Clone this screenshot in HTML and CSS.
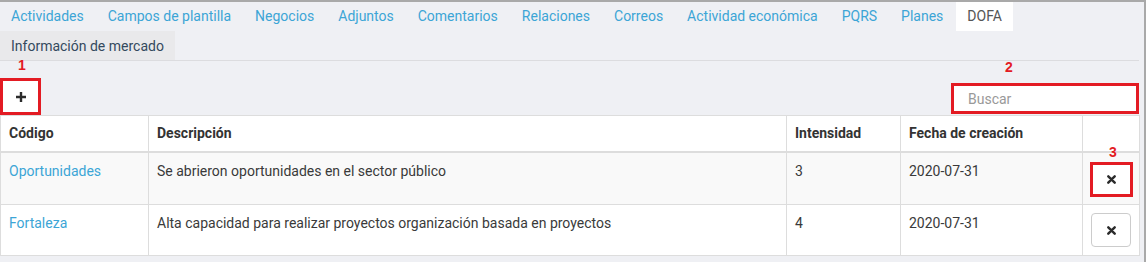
FILE: index.html
```html
<!DOCTYPE html>
<html lang="es">
<head>
  <meta charset="UTF-8">
  <title>DOFA</title>
  <link rel="stylesheet" href="styles.css">
</head>
<body>
  <div class="panel">
    <ul class="tabs">
      <li><a href="#">Actividades</a></li>
      <li><a href="#">Campos de plantilla</a></li>
      <li><a href="#">Negocios</a></li>
      <li><a href="#">Adjuntos</a></li>
      <li><a href="#">Comentarios</a></li>
      <li><a href="#">Relaciones</a></li>
      <li><a href="#">Correos</a></li>
      <li><a href="#">Actividad económica</a></li>
      <li><a href="#">PQRS</a></li>
      <li><a href="#">Planes</a></li>
      <li class="active"><a href="#">DOFA</a></li>
      <li class="hovered"><a href="#">Información de mercado</a></li>
    </ul>

    <div class="toolbar">
      <div class="marked">
        <span class="mark mark-1">1</span>
        <button class="btn btn-add flag" type="button">
          <svg width="10" height="10" viewBox="0 0 10 10"><path d="M3.8 0h2.4v3.8H10v2.4H6.2V10H3.8V6.2H0V3.8h3.8z" fill="#2b2b2b"/></svg>
        </button>
      </div>
      <div class="marked">
        <span class="mark mark-2">2</span>
        <input class="search flag" type="text" placeholder="Buscar">
      </div>
    </div>

    <table class="grid">
      <colgroup>
        <col style="width:148px">
        <col style="width:638px">
        <col style="width:114px">
        <col style="width:182px">
        <col style="width:57px">
      </colgroup>
      <thead>
        <tr>
          <th>Código</th>
          <th>Descripción</th>
          <th>Intensidad</th>
          <th>Fecha de creación</th>
          <th></th>
        </tr>
      </thead>
      <tbody>
        <tr>
          <td><a href="#">Oportunidades</a></td>
          <td>Se abrieron oportunidades en el sector público</td>
          <td>3</td>
          <td>2020-07-31</td>
          <td>
            <div class="marked">
              <span class="mark mark-3">3</span>
              <button class="btn btn-del flag" type="button">
                <svg width="9" height="9" viewBox="0 0 9 9"><path d="M1.3 1.3l6.4 6.4M7.7 1.3L1.3 7.7" stroke="#2b2b2b" stroke-width="2.4" stroke-linecap="round"/></svg>
              </button>
            </div>
          </td>
        </tr>
        <tr>
          <td><a href="#">Fortaleza</a></td>
          <td>Alta capacidad para realizar proyectos organización basada en proyectos</td>
          <td>4</td>
          <td>2020-07-31</td>
          <td>
            <button class="btn btn-del" type="button">
              <svg width="9" height="9" viewBox="0 0 9 9"><path d="M1.3 1.3l6.4 6.4M7.7 1.3L1.3 7.7" stroke="#2b2b2b" stroke-width="2.4" stroke-linecap="round"/></svg>
            </button>
          </td>
        </tr>
      </tbody>
    </table>
  </div>
</body>
</html>
```

FILE: styles.css
```css
* {
  margin: 0;
  padding: 0;
  box-sizing: border-box;
}

body {
  background: #eff0f4;
  font-family: Roboto, "Liberation Sans", sans-serif;
  font-size: 14px;
  line-height: 20px;
  color: #333;
}

.panel {
  width: 1146px;
  height: 262px;
  border-top: 2px solid #a9a9a9;
  border-right: 2px solid #a9a9a9;
  padding-right: 5px;
}

/* tabs */
.tabs {
  display: flex;
  flex-wrap: wrap;
  list-style: none;
  border-bottom: 1px solid #dcdcdf;
}

.tabs li {
  margin-right: 2px;
}

.tabs a {
  display: block;
  padding: 4px 11px 5px;
  color: #3ca5d6;
  text-decoration: none;
}

.tabs .active a {
  background: #fff;
  color: #555;
}

.tabs .hovered a {
  background: #e9e9eb;
  color: #34495e;
  padding: 5px 11px 4px;
}

/* toolbar */
.toolbar {
  display: flex;
  justify-content: space-between;
  align-items: flex-end;
  padding-top: 17px;
}

.marked {
  position: relative;
}

.mark {
  position: absolute;
  font-family: "Liberation Sans", Arial, sans-serif;
  font-weight: bold;
  font-size: 14px;
  line-height: 14px;
  color: #e31b23;
}

.mark-1 { top: -20px; left: 18px; }
.mark-2 { top: -23px; left: 54px; }
.mark-3 { top: -17px; left: 18px; }

.flag {
  border: 3px solid #e31b23 !important;
  border-radius: 0 !important;
}

.btn {
  display: flex;
  align-items: center;
  justify-content: center;
  background: #fff;
  border: 1px solid #ccc;
  border-radius: 4px;
  cursor: pointer;
}

.btn-add {
  width: 41px;
  height: 37px;
}

.search {
  width: 188px;
  height: 31px;
  margin-bottom: 1px;
  padding: 0 14px;
  background: #fff;
  font-family: Roboto, "Liberation Sans", sans-serif;
  font-size: 14px;
  color: #333;
  outline: none;
}

.search::placeholder {
  color: #999;
}

/* table */
.grid {
  width: 1139px;
  border-collapse: collapse;
  background: #fff;
  table-layout: fixed;
}

.grid th,
.grid td {
  border: 1px solid #ddd;
  padding: 8px;
  text-align: left;
  vertical-align: top;
}

.grid th {
  padding-top: 7px;
  border-bottom-width: 2px;
  font-weight: bold;
  color: #333;
}

.grid tbody tr:nth-child(odd) td {
  background: #f9f9f9;
}

.grid td {
  color: #3a3a3a;
}

.grid td a {
  color: #3ca5d6;
  text-decoration: none;
}

.btn-del {
  width: 40px;
  height: 34px;
}

.btn-del.flag {
  width: 43px;
  height: 35px;
  margin: 1px 0 -1px -1px;
}
```
